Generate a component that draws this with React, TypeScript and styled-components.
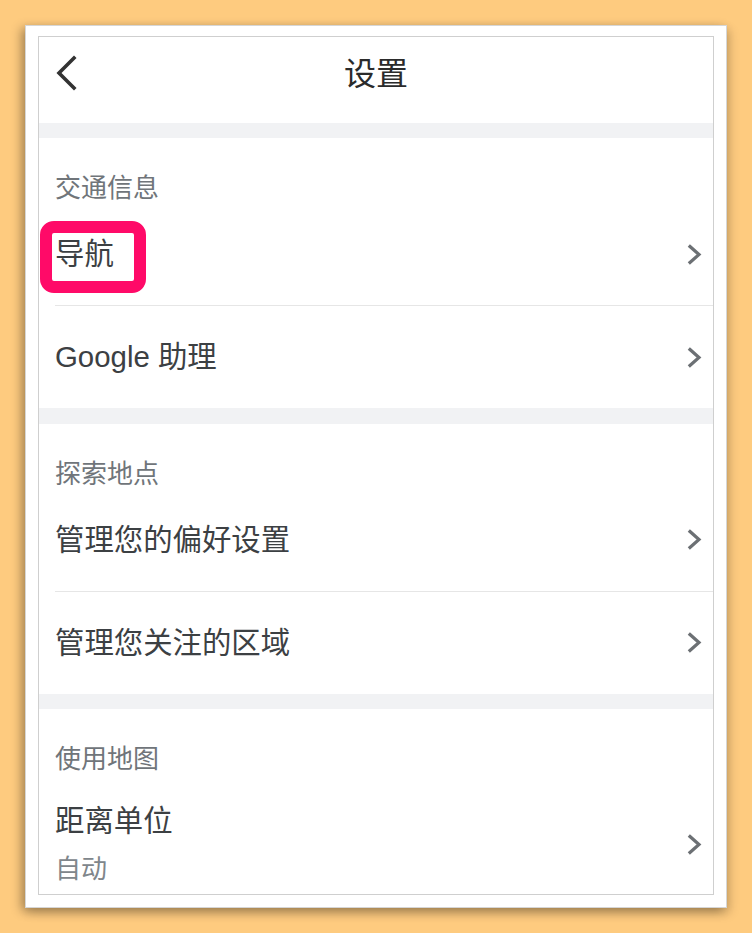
import React from "react";
import styled, { createGlobalStyle } from "styled-components";

const Global = createGlobalStyle`
  html, body { margin: 0; padding: 0; }
  body {
    background: #fecb7f;
    font-family: "Liberation Sans", "Noto Sans CJK SC", sans-serif;
    -webkit-font-smoothing: antialiased;
  }
`;

const Stage = styled.div`
  width: 752px;
  height: 933px;
  padding: 25px 0 0 25px;
  box-sizing: border-box;
`;

const Card = styled.div`
  width: 702px;
  height: 883px;
  background: #ffffff;
  border: 1px solid #d6d6d6;
  box-sizing: border-box;
  padding: 10px 12px 0 12px;
  box-shadow: -4px 3px 10px rgba(0, 0, 0, 0.3), 3px 5px 10px rgba(0, 0, 0, 0.16);
`;

const Panel = styled.div`
  width: 676px;
  height: 859px;
  box-sizing: border-box;
  border: 1px solid #cfcfcf;
  overflow: hidden;
  display: flex;
  flex-direction: column;
  background: #fff;
`;

const Header = styled.div`
  height: 86px;
  flex: none;
  box-sizing: border-box;
  padding-top: 14px;
  display: grid;
  grid-template-columns: 60px 1fr 60px;
  align-items: start;
`;

const BackButton = styled.div`
  display: flex;
  align-items: center;
  padding-left: 16px;
  padding-top: 4px;
`;

const Title = styled.div`
  text-align: center;
  font-size: 32px;
  color: #2b2b2b;
  line-height: 40px;
  font-family: "Noto Sans CJK SC", sans-serif;
`;

const Band = styled.div<{ $h: number }>`
  height: ${(p) => p.$h}px;
  flex: none;
  background: #f1f2f4;
`;

const SectionTitle = styled.div`
  height: 65px;
  flex: none;
  box-sizing: border-box;
  padding: 30px 0 0 16px;
  font-size: 26px;
  line-height: 36px;
  color: #70757a;
  font-family: "Noto Sans CJK SC", sans-serif;
`;

const Row = styled.div<{ $tall?: boolean }>`
  position: relative;
  height: ${(p) => (p.$tall ? "140px" : "102px")};
  flex: none;
  display: flex;
  align-items: ${(p) => (p.$tall ? "flex-start" : "center")};
  justify-content: space-between;
  padding: ${(p) => (p.$tall ? "27px 10px 0 16px" : "0 10px 0 16px")};
  box-sizing: border-box;
`;

const RowText = styled.div`
  display: flex;
  flex-direction: column;
`;

const Label = styled.div`
  font-size: 29.4px;
  line-height: 40px;
  color: #3c4043;
`;

const Sub = styled.div`
  margin-top: 9px;
  font-size: 26px;
  line-height: 34px;
  color: #80868b;
  font-family: "Noto Sans CJK SC", sans-serif;
`;

const ChevronBox = styled.div<{ $tall?: boolean }>`
  display: flex;
  align-items: center;
  margin-top: ${(p) => (p.$tall ? "33px" : "0")};
`;

const Divider = styled.div`
  height: 1px;
  flex: none;
  margin-left: 16px;
  background: #e6e6e6;
`;

const Highlight = styled.div`
  position: absolute;
  left: 1px;
  top: 18px;
  width: 106px;
  height: 72px;
  box-sizing: border-box;
  border: 12px solid #ff0a68;
  border-radius: 14px;
  pointer-events: none;
`;

const Chevron = () => (
  <svg width="16" height="21" viewBox="0 0 16 21">
    <path
      d="M3 2.5 L12 10.5 L3 18.5"
      fill="none"
      stroke="#6c7074"
      strokeWidth="3.2"
      strokeLinecap="square"
      strokeLinejoin="miter"
    />
  </svg>
);

const BackChevron = () => (
  <svg width="22" height="36" viewBox="0 0 22 36">
    <path
      d="M19 3 L4 18 L19 33"
      fill="none"
      stroke="#333333"
      strokeWidth="3.6"
      strokeLinecap="square"
    />
  </svg>
);

type Item = { label: string; sub?: string; highlight?: boolean };

const sections: { title: string; items: Item[] }[] = [
  { title: "交通信息", items: [{ label: "导航", highlight: true }, { label: "Google 助理" }] },
  { title: "探索地点", items: [{ label: "管理您的偏好设置" }, { label: "管理您关注的区域" }] },
  { title: "使用地图", items: [{ label: "距离单位", sub: "自动" }] },
];

export default function App() {
  return (
    <>
      <Global />
      <Stage>
        <Card>
          <Panel>
            <Header>
              <BackButton>
                <BackChevron />
              </BackButton>
              <Title>设置</Title>
              <div />
            </Header>
            {sections.map((s, si) => (
              <React.Fragment key={s.title}>
                <Band $h={si > 0 ? 15.5 : 15} />
                <SectionTitle>{s.title}</SectionTitle>
                {s.items.map((it, i) => (
                  <React.Fragment key={it.label}>
                    {i > 0 && <Divider />}
                    <Row $tall={!!it.sub}>
                      <RowText>
                        <Label>{it.label}</Label>
                        {it.sub && <Sub>{it.sub}</Sub>}
                      </RowText>
                      <ChevronBox $tall={!!it.sub}>
                        <Chevron />
                      </ChevronBox>
                      {it.highlight && <Highlight />}
                    </Row>
                  </React.Fragment>
                ))}
              </React.Fragment>
            ))}
          </Panel>
        </Card>
      </Stage>
    </>
  );
}
